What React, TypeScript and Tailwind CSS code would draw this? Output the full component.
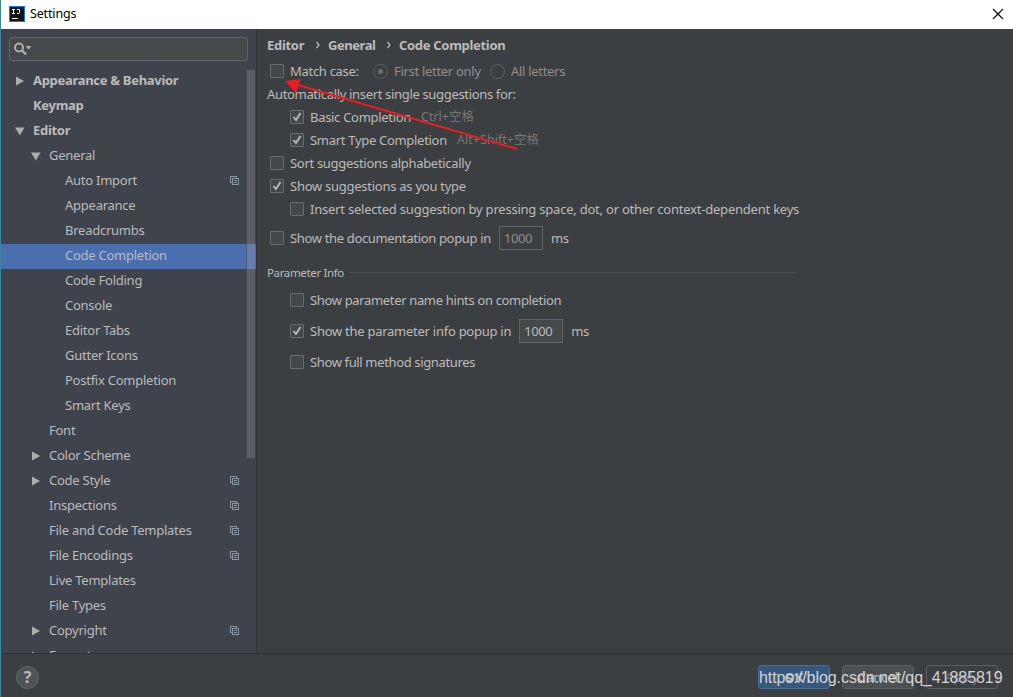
import type { ReactNode } from "react";
import { clsx } from "clsx";

interface TreeNode {
  label: string;
  level: 0 | 1 | 2;
  arrow?: "open" | "closed";
  copy?: boolean;
  selected?: boolean;
}

const TREE: TreeNode[] = [
  { label: "Appearance & Behavior", level: 0, arrow: "closed" },
  { label: "Keymap", level: 0 },
  { label: "Editor", level: 0, arrow: "open" },
  { label: "General", level: 1, arrow: "open" },
  { label: "Auto Import", level: 2, copy: true },
  { label: "Appearance", level: 2 },
  { label: "Breadcrumbs", level: 2 },
  { label: "Code Completion", level: 2, selected: true },
  { label: "Code Folding", level: 2 },
  { label: "Console", level: 2 },
  { label: "Editor Tabs", level: 2 },
  { label: "Gutter Icons", level: 2 },
  { label: "Postfix Completion", level: 2 },
  { label: "Smart Keys", level: 2 },
  { label: "Font", level: 1 },
  { label: "Color Scheme", level: 1, arrow: "closed" },
  { label: "Code Style", level: 1, arrow: "closed", copy: true },
  { label: "Inspections", level: 1, copy: true },
  { label: "File and Code Templates", level: 1, copy: true },
  { label: "File Encodings", level: 1, copy: true },
  { label: "Live Templates", level: 1 },
  { label: "File Types", level: 1 },
  { label: "Copyright", level: 1, arrow: "closed", copy: true },
  { label: "Emmet", level: 1, arrow: "closed" },
];

const INDENT = ["pl-[14px]", "pl-[30px]", "pl-[46px]"];

export default function App() {
  return (
    <div className="relative flex h-[697px] w-[1013px] flex-col overflow-hidden border-l border-[#3a87a3] bg-[#3c3f41] font-['Noto_Sans','Noto_Sans_CJK_SC',sans-serif] text-[13px] leading-[22px] whitespace-nowrap text-[#bbbbbb]">
      <TitleBar />
      <div className="flex h-[624px]">
        <Sidebar />
        <Content />
      </div>
      <Footer />
      <Pointer />
    </div>
  );
}

function TitleBar() {
  return (
    <header className="flex h-[29px] shrink-0 items-center bg-white pr-[9px] pb-[2px] pl-2 text-black">
      <svg width="16" height="16" viewBox="0 0 16 16">
        <rect width="16" height="16" fill="#1479e8" />
        <rect x="1" y="1" width="14" height="14" fill="#151515" />
        <path d="M3 3.5h3M4.5 3.5v4M3 7.5h3M8 3.5h2.5v3q0 1-1 1H8M3 12.5h6" fill="none" stroke="#fff" />
      </svg>
      <span className="ml-[5px] text-[12.5px] tracking-[-0.15px]">Settings</span>
      <svg className="ml-auto" width="12" height="12" viewBox="0 0 12 12">
        <path d="M1 1l10 10M11 1L1 11" stroke="#000" strokeWidth="1.1" />
      </svg>
    </header>
  );
}

function Sidebar() {
  return (
    <aside className="relative flex w-[256px] shrink-0 flex-col overflow-hidden border-r border-[#303234] bg-[#3f434c]">
      <div className="mt-2 ml-2 flex h-6 w-[239px] shrink-0 items-center rounded-[3px] border border-[#646464] bg-[#45494a] pl-[3px]">
        <svg width="20" height="16" viewBox="0 0 20 16">
          <circle cx="6" cy="6.5" r="4" fill="none" stroke="#adadad" strokeWidth="2" />
          <path d="M9 9.5l4 4" stroke="#adadad" strokeWidth="2.4" />
          <path d="M12.5 5h6l-3 3.5z" fill="#adadad" />
        </svg>
      </div>
      <nav className="mt-[7px] w-[255px] pt-px">
        {TREE.map((node) => (
          <TreeRow key={node.label} node={node} />
        ))}
      </nav>
      {/* scrollbar thumb floats over the rows */}
      <div className="absolute top-[41px] right-px h-[388px] w-[9px] border-l border-[#3a3d45]/60 bg-[#a6a6a6]/28" />
    </aside>
  );
}

function TreeRow({ node }: { node: TreeNode }) {
  return (
    <div
      className={clsx(
        "flex h-[25px] items-center pr-4 pb-[2px]",
        INDENT[node.level],
        node.level === 0 ? "font-bold tracking-[-0.3px]" : "tracking-[-0.25px]",
        node.selected && "bg-[#4b6eaf]",
      )}
    >
      <span className="flex w-[18px] shrink-0">
        {node.arrow === "closed" && (
          <svg width="10" height="10" viewBox="0 0 10 10">
            <path d="M1 .5v9l8-4.5z" fill="#adadad" />
          </svg>
        )}
        {node.arrow === "open" && (
          <svg width="10" height="10" viewBox="0 0 10 10">
            <path d="M0 1.5h9.5L4.8 9.5z" fill="#adadad" />
          </svg>
        )}
      </span>
      <span className="pb-px">{node.label}</span>
      {node.copy && <CopyIcon />}
    </div>
  );
}

function CopyIcon() {
  return (
    <svg className="mr-[1px] ml-auto" width="9" height="9" viewBox="0 0 9 9" shapeRendering="crispEdges">
      <path d="M2 6.5H.5v-6h6V2" fill="none" stroke="#8b96a3" />
      <rect x="2.5" y="2.5" width="6" height="6" fill="none" stroke="#8b96a3" />
      <path d="M4 4.5h3M4 6.5h3" stroke="#8b96a3" />
    </svg>
  );
}

function Content() {
  return (
    <main className="flex min-w-0 flex-1 flex-col pt-[3px] pl-[10px] tracking-[-0.3px]">
      <div className="flex h-[26px] items-center font-bold">
        <span className="w-[38px]">Editor</span>
        <Chevron />
        <span className="w-[48px] tracking-[-0.45px]">General</span>
        <Chevron />
        <span>Code Completion</span>
      </div>

      <div className="mt-[2px] flex flex-col gap-px">
        <div className="flex h-[22px] items-center pl-[3px]">
          <CheckBox />
          <span className="ml-[6px] w-[83px]">Match case:</span>
          <Radio checked />
          <span className="ml-[6px] w-[96px] text-[#8f8f8f]">First letter only</span>
          <Radio />
          <span className="ml-[6px] text-[#8f8f8f]">All letters</span>
        </div>
        <div className="h-[22px] tracking-[-0.33px]">Automatically insert single suggestions for:</div>
        <Option label="Basic Completion" checked nested>
          <span className="ml-[10px] text-[12.5px] tracking-normal text-[#777777]">Ctrl+空格</span>
        </Option>
        <Option label="Smart Type Completion" checked nested>
          <span className="ml-[10px] text-[12.5px] tracking-[0.05px] text-[#777777]">Alt+Shift+空格</span>
        </Option>
        <Option label="Sort suggestions alphabetically" />
        <Option label="Show suggestions as you type" checked className="tracking-[-0.26px]" />
        <Option
          label="Insert selected suggestion by pressing space, dot, or other context-dependent keys"
          nested
          className="tracking-[-0.22px]"
        />
      </div>

      <div className="mt-[6px]">
        <Option label="Show the documentation popup in" className="tracking-[-0.34px]">
          <NumberField value="1000" disabled />
        </Option>
      </div>

      <div className="mt-3 flex h-[22px] items-center">
        <span className="w-[83px] text-[11.5px] tracking-[-0.36px]">Parameter Info</span>
        <div className="mb-px h-px w-[446px] bg-[#515151]" />
      </div>

      <div className="mt-[5px] flex flex-col gap-2">
        <Option label="Show parameter name hints on completion" nested className="tracking-[-0.34px]" />
        <Option label="Show the parameter info popup in" checked nested className="tracking-[-0.26px]">
          <NumberField value="1000" />
        </Option>
        <Option label="Show full method signatures" nested className="tracking-[-0.36px]" />
      </div>
    </main>
  );
}

function Chevron() {
  return (
    <svg className="mr-[8px] ml-[11px]" width="4" height="8" viewBox="0 0 4 8">
      <path d="M.5 1l2.5 3L.5 7" fill="none" stroke="#bbbbbb" strokeWidth="1.2" />
    </svg>
  );
}

function CheckBox({ checked }: { checked?: boolean }) {
  return (
    <span className="flex h-[14px] w-[14px] shrink-0 rounded-[1px] border border-[#6b6b6b] bg-[#43494a]">
      {checked && (
        <svg width="12" height="12" viewBox="0 0 12 12">
          <path d="M2.5 6l2.5 3L9.5 2" fill="none" stroke="#bbbbbb" strokeWidth="1.9" />
        </svg>
      )}
    </span>
  );
}

function Radio({ checked }: { checked?: boolean }) {
  return (
    <span className="flex h-[15px] w-[15px] shrink-0 items-center justify-center rounded-full border border-[#5c5f60]">
      {checked && <span className="h-[5px] w-[5px] rounded-full bg-[#6c6e70]" />}
    </span>
  );
}

function Option({ label, checked, nested, className, children }: {
  label: string;
  checked?: boolean;
  nested?: boolean;
  className?: string;
  children?: ReactNode;
}) {
  return (
    <div className={clsx("flex min-h-[22px] items-center", nested ? "pl-[23px]" : "pl-[3px]", className)}>
      <CheckBox checked={checked} />
      <span className="ml-[6px]">{label}</span>
      {children}
    </div>
  );
}

function NumberField({ value, disabled }: { value: string; disabled?: boolean }) {
  return (
    <>
      <span
        className={clsx(
          "ml-2 flex h-6 w-11 items-center border border-[#646464] pb-px pl-1 tracking-[-0.4px]",
          disabled ? "text-[#8f8f8f]" : "bg-[#45494a]",
        )}
      >
        {value}
      </span>
      <span className="ml-2">ms</span>
    </>
  );
}

function Footer() {
  return (
    <footer className="relative flex h-[44px] items-center border-t border-[#2f3133] pt-[3px] pr-[15px] pl-[15px]">
      <span className="flex h-[23px] w-[23px] items-center justify-center rounded-full border border-[#66696b] bg-[#4f5355] text-base font-bold">
        ?
      </span>
      <div className="ml-auto flex gap-3 text-center">
        <span className="h-6 w-[72px] rounded-[3px] border border-[#4c708c] bg-[#365880] font-bold">OK</span>
        <span className="h-6 w-[72px] rounded-[3px] border border-[#5e6060] bg-[#4c5052]">Cancel</span>
        <span className="h-6 w-[72px] rounded-[3px] border border-[#5e6060] text-[#777777]">Apply</span>
      </div>
      {/* watermark */}
      <span className="absolute top-[12px] left-[758px] font-['Liberation_Sans',sans-serif] text-base tracking-[-0.06px] text-[#d4d4d4]">
        https://blog.csdn.net/qq_41885819
      </span>
    </footer>
  );
}

function Pointer() {
  return (
    <svg className="pointer-events-none absolute top-[70px] left-[275px]" width="250" height="85" viewBox="276 70 250 85">
      <path d="M298 85L517 149" stroke="#ed1c24" strokeWidth="2" />
      <path d="M285 81l16-2-5 14z" fill="#ed1c24" />
    </svg>
  );
}
